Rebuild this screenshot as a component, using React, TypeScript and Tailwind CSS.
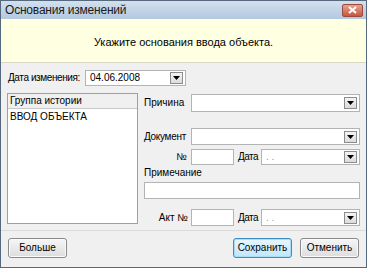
import React from "react";

function DropBtn() {
  return (
    <div className="mr-[2px] flex h-[12px] w-[13px] shrink-0 items-center justify-center border border-[#8c8c8c] bg-gradient-to-b from-[#f4f4f4] to-[#dcdcdc]">
      <svg width="7" height="4" viewBox="0 0 7 4">
        <path d="M0 0h7L3.5 4z" fill="#000" />
      </svg>
    </div>
  );
}

function Combo({ className, value, muted }: { className: string; value?: string; muted?: boolean }) {
  return (
    <div className={"flex items-center border border-[#b4b4b4] bg-white " + className}>
      <span className={"flex-1 truncate pl-[4px] " + (muted ? "text-[#9a9a9a]" : "text-black")}>{value}</span>
      <DropBtn />
    </div>
  );
}

function Field({ className }: { className: string }) {
  return <div className={"border border-[#b4b4b4] bg-white " + className} />;
}

function Button({ label, primary }: { label: string; primary?: boolean }) {
  return (
    <button
      type="button"
      className={
        "flex h-[20px] w-[59px] items-center justify-center rounded-[3px] border text-[10px] text-black " +
        (primary
          ? "border-[#3d8ec6] bg-gradient-to-b from-[#eaf6fd] to-[#bee6fd] shadow-[inset_0_0_0_1px_#a9dcf4]"
          : "border-[#8a8a8a] bg-gradient-to-b from-[#f6f6f6] to-[#dddddd] shadow-[inset_0_0_0_1px_#fbfbfb]")
      }
    >
      {label}
    </button>
  );
}

export default function App() {
  return (
    <div className="flex h-[268px] w-[367px] flex-col border border-[#56687e] bg-[#f0f0f0] font-['Liberation_Sans',Arial,sans-serif] text-[10px] leading-none text-black">
      {/* title bar */}
      <div className="flex h-[18px] shrink-0 items-center justify-between bg-gradient-to-b from-[#d3e0ee] to-[#b3c8df] pl-[4px] pr-[3px]">
        <span className="text-[12px] tracking-[-0.2px] text-[#1a1a1a]">Основания изменений</span>
        <div className="flex h-[13px] w-[21px] items-center justify-center rounded-[2px] border border-[#9a4a3e] bg-gradient-to-b from-[#e9a28f] to-[#c8553d]">
          <svg width="9" height="8" viewBox="0 0 9 8">
            <path d="M1 1l7 6M8 1L1 7" stroke="#fff" strokeWidth="2" />
          </svg>
        </div>
      </div>

      {/* hint */}
      <div className="flex h-[44px] shrink-0 items-center justify-center border-b border-[#d8d8c8] bg-[#ffffe1] pt-[4px] text-[11px]">
        Укажите основания ввода объекта.
      </div>

      {/* body */}
      <div className="flex flex-1 flex-col px-[6px]">
        <div className="mt-[7px] flex items-center">
          <span className="ml-[1px] w-[77px] whitespace-nowrap tracking-[-0.4px]">Дата изменения:</span>
          <Combo className="h-[16px] w-[101px]" value="04.06.2008" />
        </div>

        <div className="mt-[7px] flex">
          <div className="flex h-[131px] w-[131px] flex-col border border-[#a0a0a0] bg-white">
            <div className="flex h-[15px] items-center border-b border-[#c8c8c8] bg-[#f0f0f0] pl-[2px]">
              Группа истории
            </div>
            <div className="mt-[3px] pl-[2px]">ВВОД ОБЪЕКТА</div>
          </div>

          <div className="ml-[6px] flex flex-1 flex-col">
            <div className="mt-[1px] flex items-center">
              <span className="w-[47px] whitespace-nowrap">Причина</span>
              <Combo className="h-[18px] flex-1" />
            </div>
            <div className="mt-[16px] flex items-center">
              <span className="w-[47px] whitespace-nowrap tracking-[-0.3px]">Документ</span>
              <Combo className="h-[17px] flex-1" />
            </div>
            <div className="mt-[4px] flex items-center">
              <span className="w-[47px] pr-[4px] text-right">№</span>
              <Field className="h-[16px] w-[43px]" />
              <span className="w-[27px] whitespace-nowrap pl-[4px] tracking-[-0.5px]">Дата</span>
              <Combo className="h-[16px] flex-1" value=". ." muted />
            </div>
            <div className="mt-[3px] h-[12px]">Примечание</div>
            <Field className="mt-[2px] h-[17px] w-full" />
            <div className="mt-[10px] flex items-center">
              <span className="w-[47px] whitespace-nowrap pr-[3px] text-right">Акт №</span>
              <Field className="h-[17px] w-[43px]" />
              <span className="w-[27px] whitespace-nowrap pl-[4px] tracking-[-0.5px]">Дата</span>
              <Combo className="h-[17px] flex-1" value=". ." muted />
            </div>
          </div>
        </div>
      </div>

      {/* footer */}
      <div className="flex h-[37px] shrink-0 items-center border-t border-[#dadada] px-[7px] pb-[2px]">
        <Button label="Больше" />
        <div className="flex-1" />
        <Button label="Сохранить" primary />
        <div className="w-[8px]" />
        <Button label="Отменить" />
      </div>
    </div>
  );
}
